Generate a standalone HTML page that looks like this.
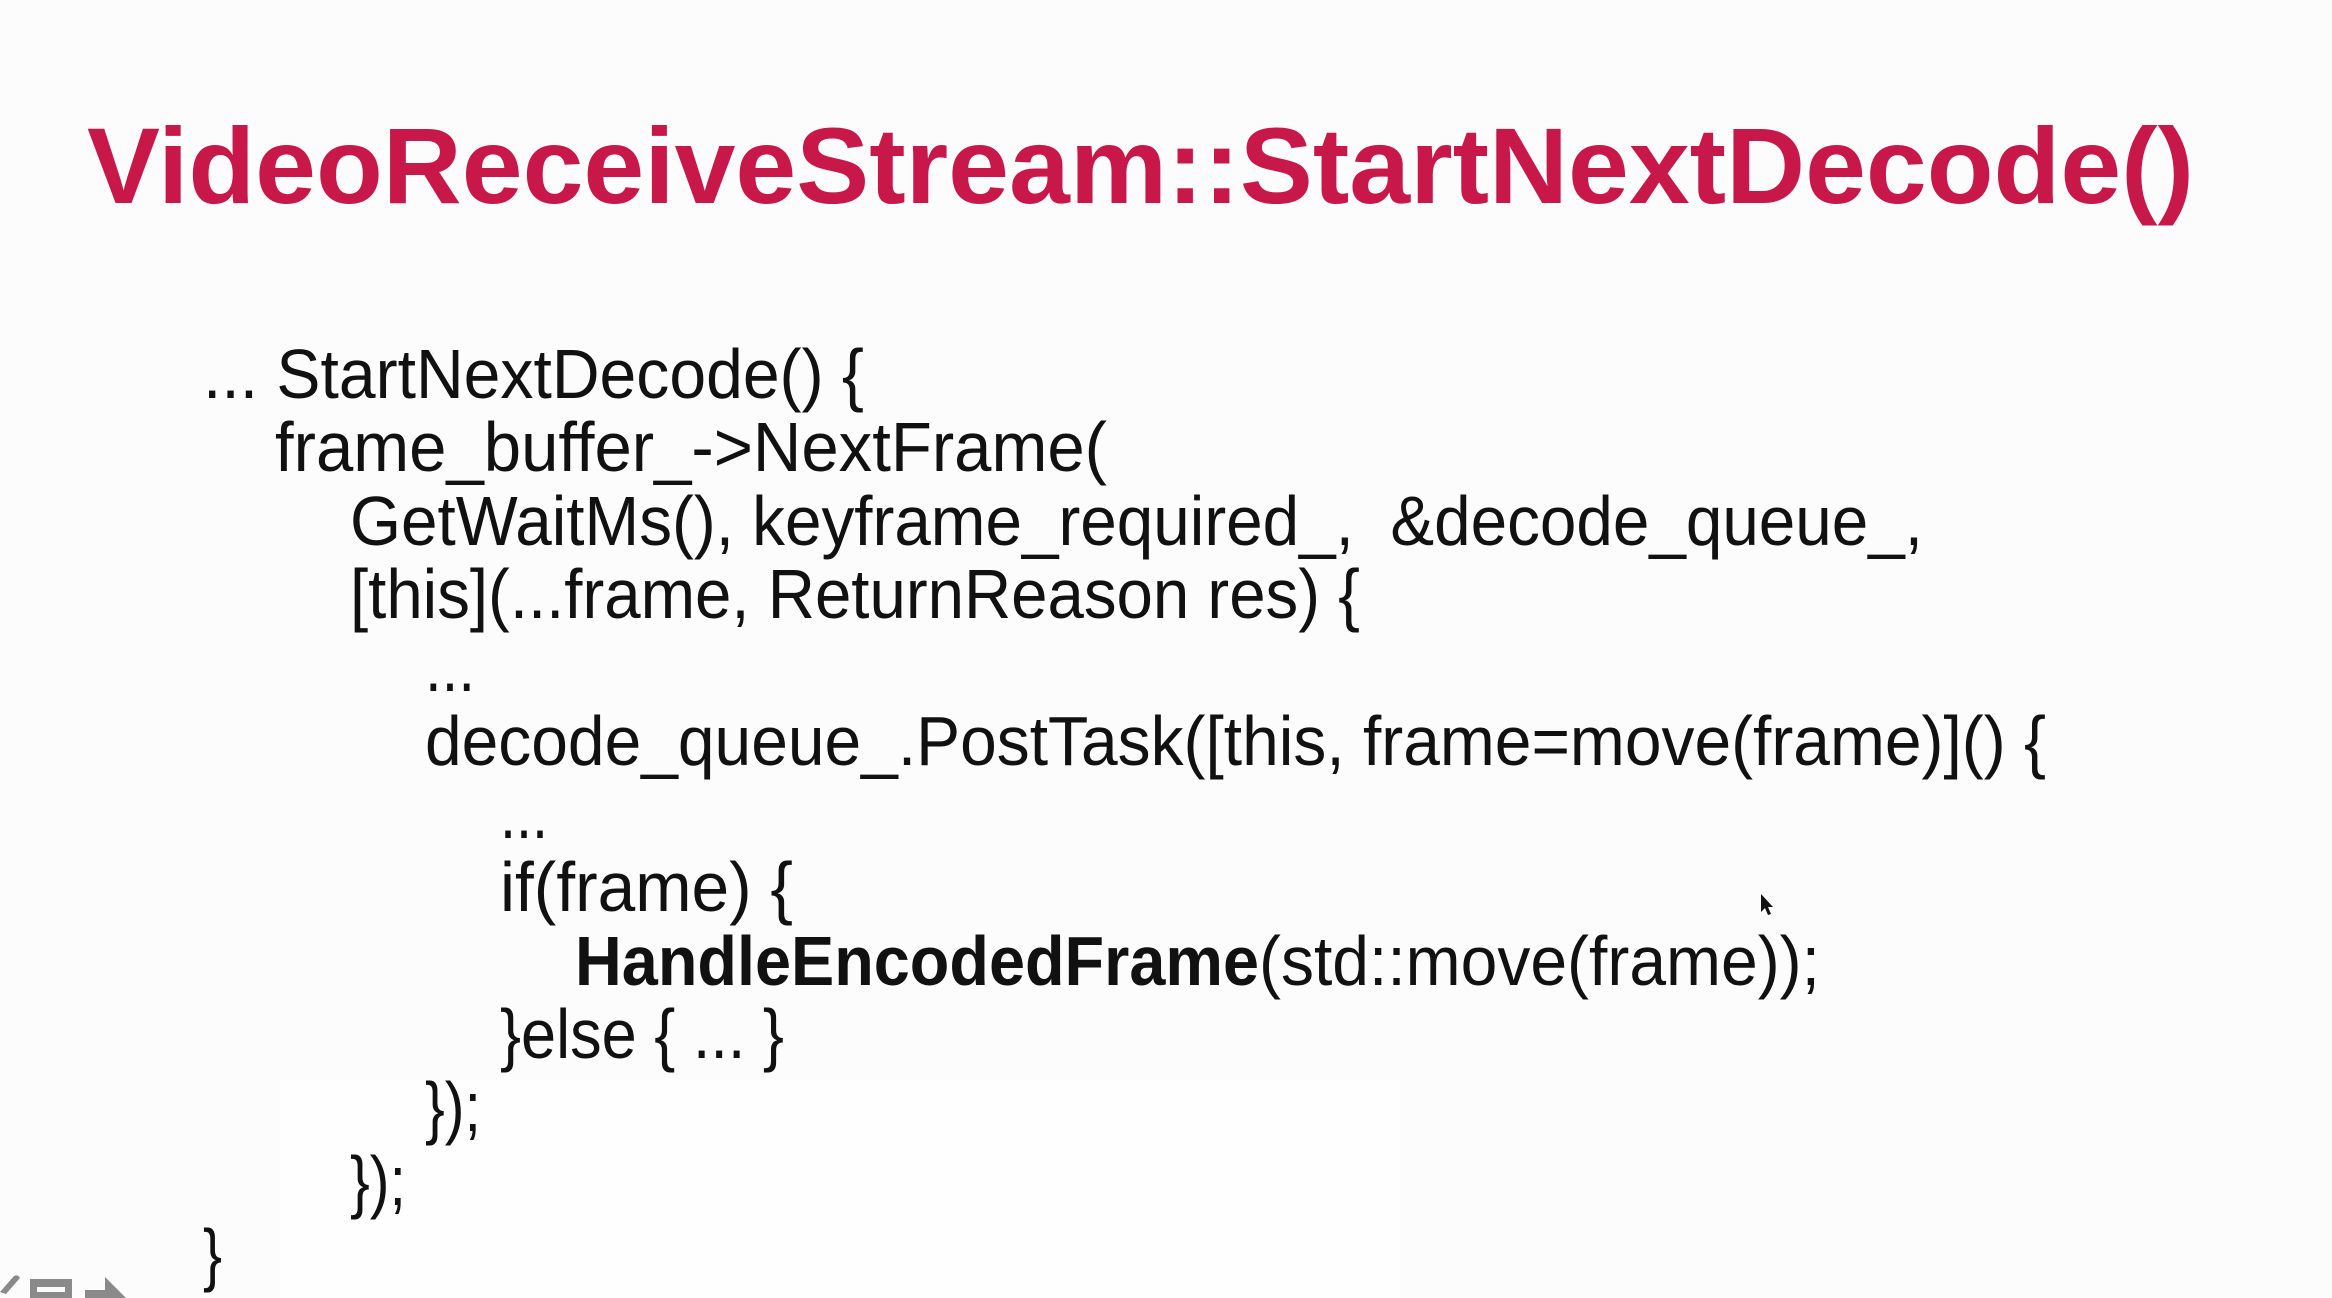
<!DOCTYPE html>
<html><head><meta charset="utf-8"><style>
html,body{margin:0;padding:0;background:#fcfcfc;}
svg{display:block}
</style></head><body>
<svg width="2332" height="1298" viewBox="0 0 2332 1298" xmlns="http://www.w3.org/2000/svg">
<rect width="2332" height="1298" fill="#fcfcfc"/>
<rect x="280" y="1080" width="1120" height="218" fill="#fefefe"/>
<text x="87" y="203" font-family="Liberation Sans, sans-serif" font-weight="bold" font-size="108" fill="#c8184a" textLength="2107" lengthAdjust="spacingAndGlyphs">VideoReceiveStream::StartNextDecode()</text>
<g font-family="Liberation Sans, sans-serif" font-size="70" fill="#111">
<text x="203" y="398" textLength="661" lengthAdjust="spacingAndGlyphs">... StartNextDecode() {</text>
<text x="275" y="471" textLength="832" lengthAdjust="spacingAndGlyphs">frame_buffer_-&gt;NextFrame(</text>
<text x="350" y="545" textLength="1573" lengthAdjust="spacingAndGlyphs" xml:space="preserve">GetWaitMs(), keyframe_required_,  &amp;decode_queue_,</text>
<text x="350" y="618" textLength="1010" lengthAdjust="spacingAndGlyphs">[this](...frame, ReturnReason res) {</text>
<text x="425" y="691" textLength="50" lengthAdjust="spacingAndGlyphs">...</text>
<text x="425" y="765" textLength="1621" lengthAdjust="spacingAndGlyphs">decode_queue_.PostTask([this, frame=move(frame)]() {</text>
<text x="500" y="838" textLength="48" lengthAdjust="spacingAndGlyphs">...</text>
<text x="500" y="911" textLength="293" lengthAdjust="spacingAndGlyphs">if(frame) {</text>
<text x="575" y="985" font-weight="bold" textLength="684" lengthAdjust="spacingAndGlyphs">HandleEncodedFrame</text>
<text x="1259" y="985" textLength="561" lengthAdjust="spacingAndGlyphs">(std::move(frame));</text>
<text x="500" y="1058" textLength="284" lengthAdjust="spacingAndGlyphs">}else { ... }</text>
<text x="425" y="1131" textLength="56" lengthAdjust="spacingAndGlyphs">});</text>
<text x="350" y="1205" textLength="56" lengthAdjust="spacingAndGlyphs">});</text>
<text x="203" y="1278" textLength="19" lengthAdjust="spacingAndGlyphs">}</text>
</g>
<path d="M1761 894 L1761 912 L1765 908 L1768 915 L1771 914 L1768 907 L1773 907 Z" fill="#111"/>
<g fill="#8a8a8a">
<path d="M0 1292 L14 1276 Q18 1274 20 1278 L6 1294 Z"/>
<rect x="30" y="1279" width="42" height="19"/>
<rect x="37" y="1287" width="28" height="5" fill="#fcfcfc"/>
<path d="M85 1290 L105 1290 L105 1277 L126 1298 L85 1298 Z"/>
</g>
</svg>
</body></html>
